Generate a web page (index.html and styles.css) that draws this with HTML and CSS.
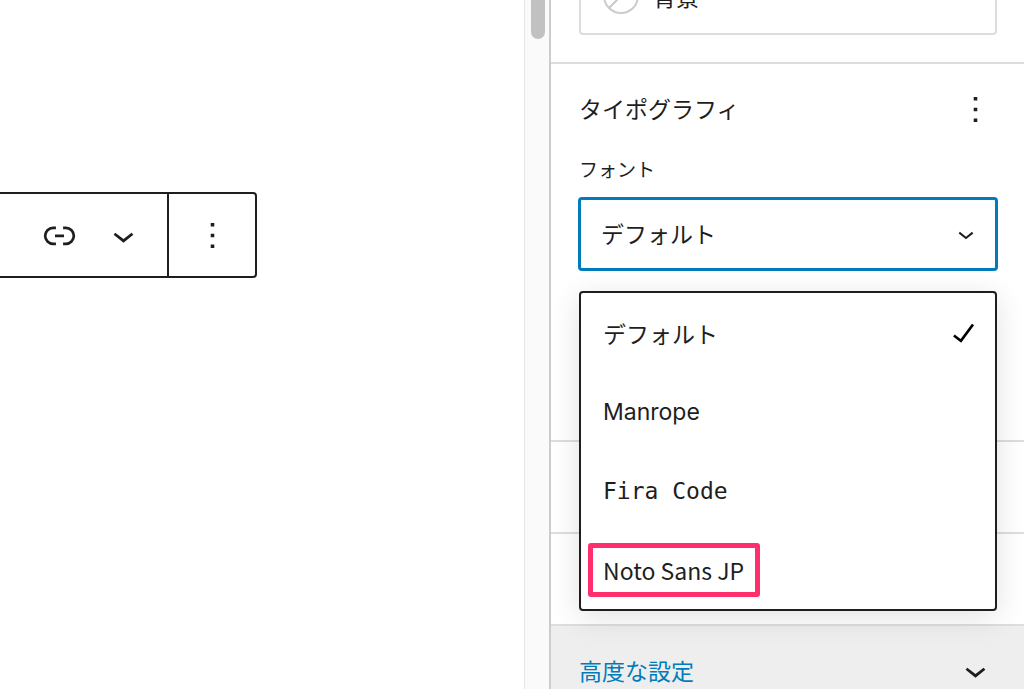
FILE: index.html
```html
<!DOCTYPE html>
<html lang="ja">
<head>
  <meta charset="UTF-8" />
  <meta name="viewport" content="width=device-width, initial-scale=1.0" />
  <title>タイポグラフィ設定</title>
  <link rel="stylesheet" href="styles.css">
</head>
<body>

<main id="canvas">
  <div class="toolbar">
    <div class="toolbar-group">
      <button type="button" aria-label="リンク">
        <svg width="43" height="43" viewBox="0 0 24 24"><path d="M10 17.389H8.444A5.194 5.194 0 1 1 8.444 7H10v1.5H8.444a3.694 3.694 0 0 0 0 7.389H10v1.5ZM14 7h1.556a5.194 5.194 0 0 1 0 10.39H14v-1.5h1.556a3.694 3.694 0 0 0 0-7.39H14V7Zm-4.5 6h5v-1.5h-5V13Z" fill="currentColor"/></svg>
      </button>
      <button type="button" aria-label="さらに表示">
        <svg width="43" height="43" viewBox="0 0 24 24"><path d="M17.5 11.6L12 16l-5.5-4.4.9-1.2L12 14l4.5-3.6 1 1.2z" fill="currentColor"/></svg>
      </button>
    </div>
    <div class="toolbar-group options">
      <button type="button" aria-label="オプション">
        <svg width="43" height="43" viewBox="0 0 24 24"><path d="M13 19h-2v-2h2v2zm0-6h-2v-2h2v2zm0-6h-2V5h2v2z" fill="currentColor"/></svg>
      </button>
    </div>
  </div>
</main>

<div class="scrollbar"><div class="thumb"></div></div>

<aside id="sidebar">
  <section class="panel color-panel">
    <button type="button" class="color-item"><span class="swatch"></span>背景</button>
  </section>

  <section class="panel typography">
    <div class="panel-header">
      <h2>タイポグラフィ</h2>
      <button type="button" aria-label="タイポグラフィのオプション">
        <svg width="43" height="43" viewBox="0 0 24 24"><path d="M13 19h-2v-2h2v2zm0-6h-2v-2h2v2zm0-6h-2V5h2v2z" fill="currentColor"/></svg>
      </button>
    </div>
    <label for="font">フォント</label>
    <div class="select-wrap">
      <select id="font">
        <option>デフォルト</option>
        <option>Manrope</option>
        <option>Fira Code</option>
        <option>Noto Sans JP</option>
      </select>
      <svg class="select-arrow" width="32" height="32" viewBox="0 0 24 24"><path d="M17.5 11.6L12 16l-5.5-4.4.9-1.2L12 14l4.5-3.6 1 1.2z" fill="currentColor"/></svg>

      <ul class="font-list" role="listbox" aria-label="フォント">
        <li role="option" aria-selected="true">デフォルト
          <svg width="43" height="43" viewBox="0 0 24 24"><path d="M16.7 7.1l-6.3 8.5-3.3-2.5-.9 1.2 4.5 3.4L17.9 8z" fill="#000"/></svg>
        </li>
        <li role="option" class="manrope">Manrope</li>
        <li role="option" class="fira">Fira Code</li>
        <li role="option" class="noto"><span class="marker">Noto Sans JP</span></li>
      </ul>
    </div>
  </section>

  <section class="panel empty"></section>
  <section class="panel empty"></section>

  <section class="panel advanced">
    <button type="button">高度な設定
      <svg width="43" height="43" viewBox="0 0 24 24"><path d="M17.5 11.6L12 16l-5.5-4.4.9-1.2L12 14l4.5-3.6 1 1.2z" fill="currentColor"/></svg>
    </button>
  </section>
</aside>

</body>
</html>
```
FILE: styles.css
```css
* {
  box-sizing: border-box;
}

body {
  margin: 0;
  height: 100vh;
  display: grid;
  grid-template-columns: 1fr 25px 475px;
  overflow: hidden;
  background: white;
  color: #1e1e1e;
  font-family: "Noto Sans CJK JP", sans-serif;
  font-size: 23px;
  line-height: 32px;
}

button {
  display: flex;
  align-items: center;
  justify-content: center;
  padding: 0;
  border: 0;
  background: none;
  color: inherit;
  font: inherit;
  cursor: pointer;
}

svg {
  display: block;
  flex: none;
}

#canvas {
  padding-top: 192px;
}

.toolbar {
  display: flex;
  width: 257px;
  height: 86px;
  border: 2px solid #1e1e1e;
  border-left: 0;
  border-radius: 0 4px 4px 0;
}

.toolbar-group {
  display: flex;
  flex: 1;
  align-items: center;
  justify-content: flex-end;
  gap: 21px;
  padding-right: 22px;
}

.toolbar-group.options {
  flex: none;
  width: 88px;
  padding: 0;
  justify-content: center;
  border-left: 2px solid #1e1e1e;
}

.scrollbar {
  background: #fafafa;
  border-left: 1px solid #e6e6e6;
  padding: 0 4px 0 6px;
}

.thumb {
  height: 39px;
  background: #c1c1c1;
  border-radius: 0 0 7px 7px;
}

#sidebar {
  overflow: hidden;
  border-left: 2px solid #ccc;
}

.panel {
  padding: 0 27px 0 28px;
  border-top: 2px solid #ddd;
}

/* scrolled partly out of view */
.color-panel {
  margin-top: -43px;
  height: 105px;
}

.color-item {
  width: 100%;
  height: 76px;
  padding: 0 0 2px 22px;
  gap: 14px;
  justify-content: flex-start;
  border: 2px solid #ddd;
  border-radius: 4px;
}

.swatch {
  width: 36px;
  height: 36px;
  border: 2px solid #ccc;
  border-radius: 50%;
  background: linear-gradient(-45deg, transparent 48%, #ccc 48%, #ccc 52%, transparent 52%);
}

.typography {
  height: 378px;
  padding-top: 24px;
}

.panel-header {
  display: flex;
  align-items: center;
  justify-content: space-between;
}

h2 {
  margin: 0;
  padding-bottom: 4px;
  font-size: 23px;
  font-weight: 400;
}

label {
  display: block;
  margin-top: 24px;
  font-size: 19px;
  line-height: 28px;
}

.select-wrap {
  position: relative;
  margin: 14px -1px 0;
}

select {
  display: block;
  width: 100%;
  height: 74px;
  padding: 0 20px 2px;
  border: 3px solid #007cba;
  border-radius: 4px;
  background: white;
  color: inherit;
  font: inherit;
  appearance: none;
  outline: none;
}

.select-arrow {
  position: absolute;
  top: 21px;
  right: 16px;
  pointer-events: none;
}

.font-list {
  position: absolute;
  top: 94px;
  left: 0;
  right: 0;
  z-index: 10;
  margin: 0 1px;
  padding: 0;
  list-style: none;
  background: white;
  border: 2px solid #1e1e1e;
  border-radius: 4px;
  box-shadow: 0 6px 30px rgba(0, 0, 0, 0.12);
}

.font-list li {
  display: flex;
  align-items: center;
  justify-content: space-between;
  height: 79px;
  padding: 0 10px 0 22px;
  cursor: pointer;
}

.font-list .manrope {
  font-family: Inter, sans-serif;
}

.font-list .fira {
  font-family: "DejaVu Sans Mono", monospace;
}

.font-list .noto {
  padding-left: 7px;
}

.marker {
  padding: 6px 11px 6px 10px;
  border: 5px solid #ff2e6d;
  border-radius: 3px;
}

.empty {
  height: 92px;
}

.advanced {
  height: 100px;
  padding-right: 0;
  background: #eee;
}

.advanced button {
  width: 100%;
  height: 88px;
  padding-right: 27px;
  justify-content: space-between;
  color: #007cba;
}

.advanced svg {
  color: #1e1e1e;
}
```
